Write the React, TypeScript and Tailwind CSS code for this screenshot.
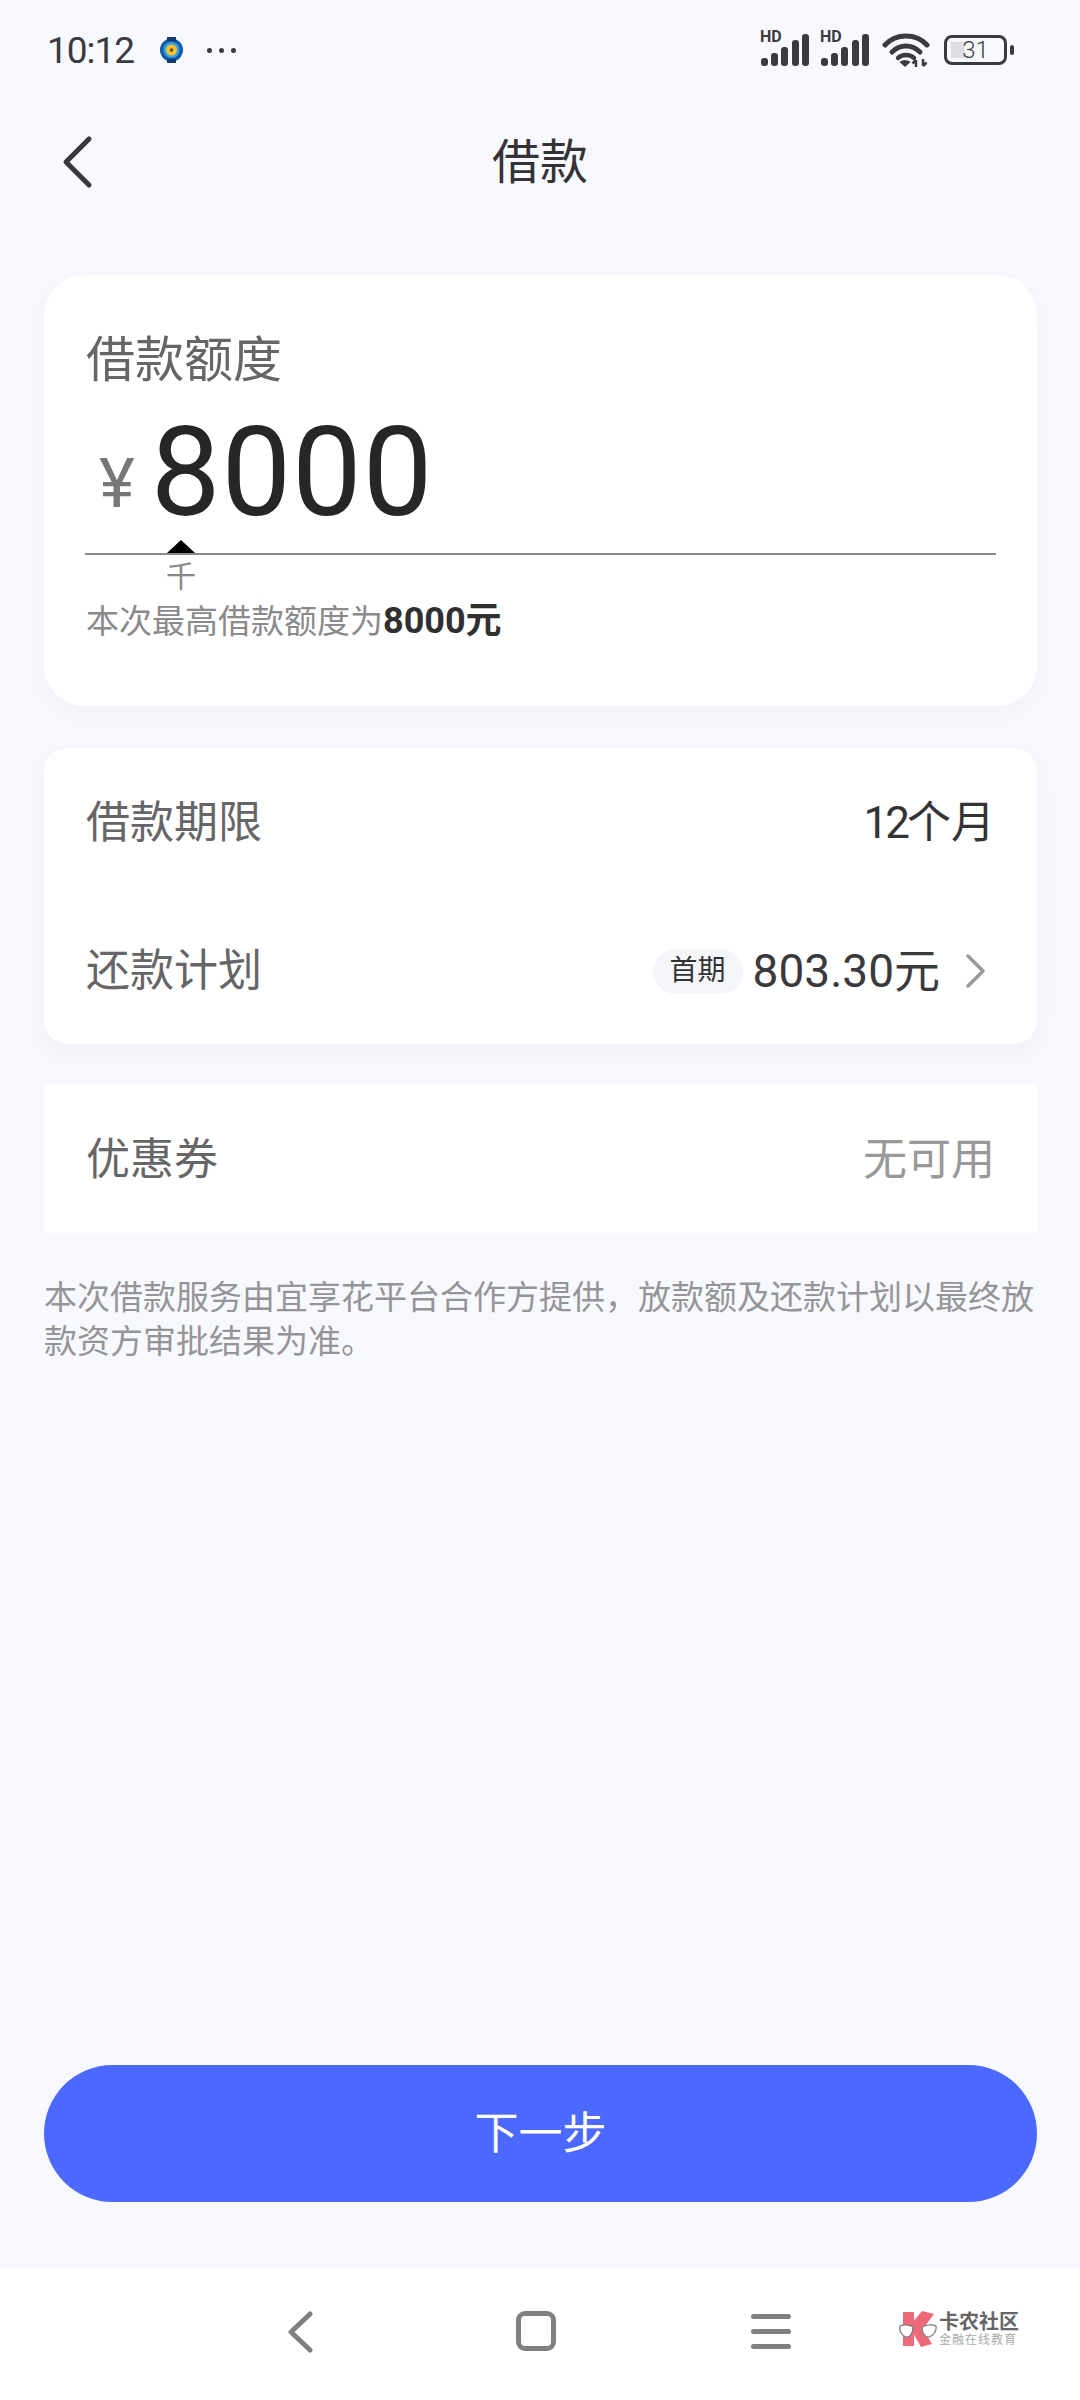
const FONT = "font-['Roboto','Noto_Sans_CJK_SC',sans-serif]";

function SignalIcon() {
  return (
    <div className="relative h-[36px] w-[50px]">
      <span className="absolute left-0 top-[-3px] text-[16px] font-bold leading-[16px] text-[#3a3a3f]">HD</span>
      <svg className="absolute left-0 top-0" width="50" height="36" viewBox="0 0 50 36" fill="#3a3a3f">
        <rect x="1" y="26" width="7" height="8" rx="3" />
        <rect x="11" y="21" width="7" height="13" rx="3" />
        <rect x="21" y="15" width="7" height="19" rx="3" />
        <rect x="32" y="8" width="7" height="26" rx="3" />
        <rect x="42" y="2" width="7" height="32" rx="3" />
      </svg>
    </div>
  );
}

function WifiIcon() {
  return (
    <svg width="48" height="36" viewBox="0 0 48 36" fill="none" stroke="#3a3a3f" strokeWidth="5" strokeLinecap="round">
      <path d="M3 13C14 1 34 1 45 13" />
      <path d="M10 20C18 12 30 12 38 20" />
      <path d="M16 26C20 22 28 22 32 26" strokeWidth="4.5" />
      <path d="M23 35L17.5 30C20 27.5 26 27.5 28.5 30Z" fill="#3a3a3f" stroke="none" />
      <path d="M34 35V28M34 28L30.5 31.5M41 27V34M41 34L44.5 30.5" strokeWidth="2.5" strokeLinecap="butt" />
    </svg>
  );
}

function BatteryIcon() {
  return (
    <div className="flex items-center gap-[3px]">
      <div className="relative flex h-[30px] w-[63px] items-center justify-center rounded-[8px] border-[3px] border-[#3a3a3f]">
        <div className="absolute left-[4px] top-[4px] h-[16px] w-[14px] bg-[#dedee2]" />
        <span className="relative text-[24px] font-light leading-[24px] text-[#3a3a3f]">31</span>
      </div>
      <div className="h-[10px] w-[4px] rounded-[2px] bg-[#3a3a3f]" />
    </div>
  );
}

function WatchIcon() {
  return (
    <svg width="25" height="26" viewBox="0 0 25 26">
      <circle cx="12.5" cy="13" r="11.5" fill="#0f5cab" />
      <rect x="8" y="0" width="9" height="4" fill="#123d6e" />
      <rect x="8" y="22" width="9" height="4" fill="#123d6e" />
      <circle cx="12.5" cy="13" r="8" fill="#3aa0e0" />
      <circle cx="12.5" cy="13" r="5.5" fill="#f2c230" />
      <circle cx="12.5" cy="13" r="1.8" fill="#5a4a1a" />
    </svg>
  );
}

function StatusBar() {
  return (
    <div className="flex h-[100px] shrink-0 items-center justify-between pl-[47px] pr-[66px]">
      <div className="flex items-center">
        <span className="text-[37px] font-normal leading-none tracking-[-1px] text-[#3a3a3f]">10:12</span>
        <div className="ml-[25px]">
          <WatchIcon />
        </div>
        <div className="ml-[23px] flex gap-[7px]">
          <span className="h-[5px] w-[5px] rounded-full bg-[#3a3a3f]" />
          <span className="h-[5px] w-[5px] rounded-full bg-[#3a3a3f]" />
          <span className="h-[5px] w-[5px] rounded-full bg-[#3a3a3f]" />
        </div>
      </div>
      <div className="flex items-center">
        <SignalIcon />
        <div className="ml-[10px]">
          <SignalIcon />
        </div>
        <div className="ml-[12px]">
          <WifiIcon />
        </div>
        <div className="ml-[14px]">
          <BatteryIcon />
        </div>
      </div>
    </div>
  );
}

function Header() {
  return (
    <div className="relative flex h-[124px] shrink-0 items-center justify-center">
      <svg className="absolute left-[60px] top-[35px]" width="34" height="54" viewBox="0 0 34 54" fill="none">
        <path d="M29 4L6 27L29 50" stroke="#38383c" strokeWidth="5" strokeLinecap="round" strokeLinejoin="round" />
      </svg>
      <h1 className="pt-[2px] text-[48px] font-normal leading-none text-[#333336]">借款</h1>
    </div>
  );
}

function AmountCard() {
  return (
    <section className="rounded-[40px] bg-white px-[42px] pb-[62px] pt-[62px] shadow-[0_8px_24px_rgba(70,80,140,0.04)]">
      <div className="text-[49px] leading-[48px] text-[#666668]">借款额度</div>
      <div className="mt-[29px] flex h-[120px] items-center">
        <span className="ml-[13px] mt-[20px] text-[68px] leading-none text-[#777779]">¥</span>
        <span className="-mt-[3px] ml-[16px] text-[124px] leading-[120px] tracking-[1px] text-[#262628]">8000</span>
      </div>
      <div className="ml-[81px] mt-[6px] h-0 w-0 border-x-[14px] border-b-[13px] border-x-transparent border-b-black" />
      <div className="-mx-[1px] h-[2px] bg-[#8a8a8c]" />
      <div className="ml-[80px] mt-[7px] text-[30px] leading-[30px] text-[#888888]">千</div>
      <div className="mt-[8px] h-[44px] text-[33px] leading-[44px] text-[#8a8a8c]">
        本次最高借款额度为<span className="text-[36px] font-bold leading-none text-[#303033]">8000元</span>
      </div>
    </section>
  );
}

function Row({ label, children }: { label: string; children: React.ReactNode }) {
  return (
    <div className="flex h-[148px] items-center justify-between px-[42px] pt-[2px]">
      <span className="text-[44px] leading-none text-[#666668]">{label}</span>
      {children}
    </div>
  );
}

function TermsCard() {
  return (
    <section className="mt-[42px] rounded-[24px] bg-white shadow-[0_8px_24px_rgba(70,80,140,0.05)]">
      <Row label="借款期限">
        <span className="text-[44px] leading-none text-[#333336]">
          <span className="tracking-[-3px]">12</span>个月
        </span>
      </Row>
      <Row label="还款计划">
        <div className="mr-[8px] flex items-center">
          <span className="flex h-[45px] w-[90px] items-center justify-center rounded-full bg-[#f5f6fa] text-[28px] leading-none text-[#333336]">
            首期
          </span>
          <span className="ml-[10px] text-[46px] leading-none text-[#3a3a3d]">803.30元</span>
          <svg className="ml-[25px]" width="22" height="36" viewBox="0 0 22 36" fill="none">
            <path d="M3 3L18 18L3 33" stroke="#999999" strokeWidth="3.5" strokeLinecap="round" strokeLinejoin="round" />
          </svg>
        </div>
      </Row>
    </section>
  );
}

function CouponCard() {
  return (
    <section className="mt-[41px] bg-white">
      <Row label="优惠券">
        <span className="text-[44px] leading-none text-[#999999]">无可用</span>
      </Row>
    </section>
  );
}

function Logo() {
  return (
    <div className="flex items-center">
      <svg width="38" height="36" viewBox="0 0 38 36">
        <path d="M4 1H15V35H4Z" fill="#ee6a7a" />
        <path d="M23 0L35 3L24 18L33 33L22 36L13 20V12Z" fill="#ee6a7a" />
        <path d="M1 15C5 13 11 14 14 16C14 22 11 27 7 26C3 25 0 20 1 15Z" fill="#ffffff" stroke="#777777" strokeWidth="1.2" />
        <path d="M37 15C33 13 26 14 23 16C23 22 26 27 30 26C34 25 38 20 37 15Z" fill="#ffffff" stroke="#777777" strokeWidth="1.2" />
      </svg>
      <div className="ml-[2px] flex flex-col">
        <span className="text-[20px] font-bold leading-[20px] text-[#666666]">卡农社区</span>
        <span className="mt-[2px] text-[12px] leading-[12px] tracking-[1px] text-[#aaaaaa]">金融在线教育</span>
      </div>
    </div>
  );
}

function NavBar() {
  return (
    <nav className="relative flex h-[131px] shrink-0 items-start bg-white pl-[286px] pt-[42px]">
      <svg width="28" height="42" viewBox="0 0 28 42" fill="none">
        <path d="M24 3L5 21L24 39" stroke="#808080" strokeWidth="5" strokeLinecap="round" strokeLinejoin="round" />
      </svg>
      <div className="ml-[202px] h-[40px] w-[40px] rounded-[9px] border-[5px] border-[#808080]" />
      <div className="ml-[195px] mt-[3px] flex flex-col gap-[10px]">
        <span className="h-[5px] w-[40px] rounded-full bg-[#808080]" />
        <span className="h-[5px] w-[40px] rounded-full bg-[#808080]" />
        <span className="h-[5px] w-[40px] rounded-full bg-[#808080]" />
      </div>
      <div className="ml-[108px]">
        <Logo />
      </div>
    </nav>
  );
}

export default function App() {
  return (
    <div className={`flex h-[2400px] w-[1080px] flex-col bg-[#f8f9fe] ${FONT}`}>
      <StatusBar />
      <Header />
      <main className="flex flex-1 flex-col pb-[67px] pl-[44px] pr-[43px] pt-[51px]">
        <AmountCard />
        <TermsCard />
        <CouponCard />
        <p className="mt-[43px] text-[33px] leading-[44px] text-[#959597]">
          本次借款服务由宜享花平台合作方提供，放款额及还款计划以最终放款资方审批结果为准。
        </p>
        <button className="mt-auto flex h-[137px] items-center justify-center rounded-full bg-[#4c69ff] text-[44px] text-white">
          下一步
        </button>
      </main>
      <NavBar />
    </div>
  );
}
